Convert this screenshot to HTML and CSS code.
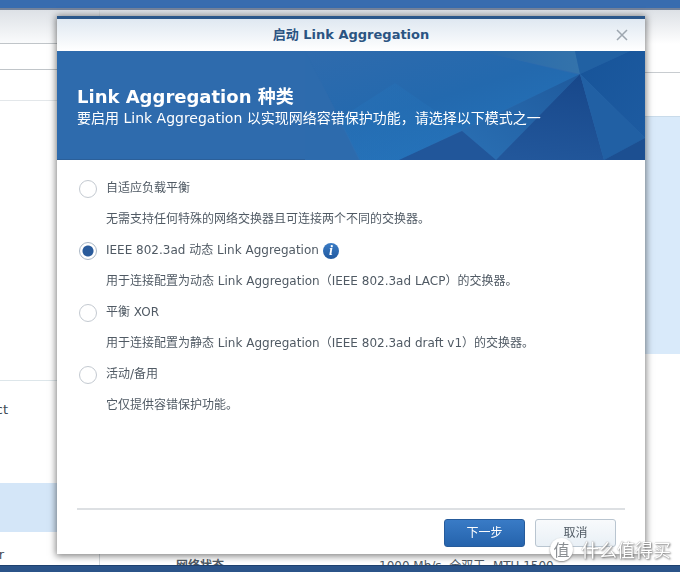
FILE: index.html
```html
<!DOCTYPE html>
<html lang="zh-CN">
<head>
<meta charset="utf-8">
<title>启动 Link Aggregation</title>
<link rel="stylesheet" href="styles.css">
</head>
<body>
<div class="desktop">
  <div class="window-bar"></div>
  <div class="backdrop">
    <nav class="sidebar">
      <div class="side-toolbar"></div>
      <div class="side-search"></div>
      <div class="side-head"></div>
      <div class="side-group"></div>
      <div class="side-item">ct</div>
      <div class="side-item selected"></div>
      <div class="side-item last">r</div>
    </nav>
    <div class="content">
      <div class="content-toolbar"></div>
      <div class="content-tools"></div>
      <div class="card"></div>
      <div class="status"><b>网络状态</b><span>1000 Mb/s, 全双工, MTU 1500</span></div>
    </div>
  </div>
  <div class="taskbar"></div>
</div>

<form class="dialog" role="dialog" aria-labelledby="dialog-title">
  <header class="titlebar">
    <span class="title" id="dialog-title">启动 Link Aggregation</span>
    <button class="close" type="button" aria-label="关闭">
      <svg viewBox="0 0 12 12" width="12" height="12"><path d="M1 1L11 11M11 1L1 11"/></svg>
    </button>
  </header>
  <section class="banner">
    <svg class="facets" viewBox="0 0 340 109" aria-hidden="true">
      <defs>
        <linearGradient id="glow" x1="0" y1="0" x2=".8" y2="1"><stop offset="0" stop-color="#2f6bad"/><stop offset=".5" stop-color="#2369ae"/><stop offset="1" stop-color="#2474bc"/></linearGradient>
        <linearGradient id="bright" x1="0" y1="1" x2="1" y2="0"><stop offset="0" stop-color="#2877bf"/><stop offset="1" stop-color="#2470b6"/></linearGradient>
        <linearGradient id="side" x1="1" y1="0" x2="0" y2="1"><stop offset="0" stop-color="#1f5a9d"/><stop offset="1" stop-color="#2a70b4"/></linearGradient>
        <linearGradient id="deep" x1=".5" y1="0" x2=".3" y2="1"><stop offset="0" stop-color="#18488b"/><stop offset="1" stop-color="#22579b"/></linearGradient>
        <linearGradient id="right" x1="0" y1="0" x2="1" y2="1"><stop offset="0" stop-color="#175499"/><stop offset="1" stop-color="#1d5ba1"/></linearGradient>
        <linearGradient id="haze" x1="0" y1="0" x2="1" y2="0"><stop offset="0" stop-color="#2869aa"/><stop offset="1" stop-color="#3473ab"/></linearGradient>
      </defs>
      <path fill="#2e6bad" d="M0 0H340V109H0Z"/>
      <path fill="url(#glow)" d="M0 0H175L275 24L155 80L95 109H55L35 68Z"/>
      <path fill="#2d6bad" d="M0 0L35 68L55 109H0Z"/>
      <path fill="url(#bright)" d="M90 32L132 61L157 80L94 109H54L34 68Z" opacity=".4"/>
      <path fill="url(#haze)" d="M174 0H270L275 23Z"/>
      <path fill="#2161a3" d="M270 0H325L275 23Z"/>
      <path fill="url(#right)" d="M325 0H340V87L275 23Z"/>
      <path fill="url(#side)" d="M275 23L157 80L191 109Z"/>
      <path fill="#21569a" d="M94 109L157 80L191 109Z"/>
      <path fill="url(#deep)" d="M275 23L191 109H299Z"/>
      <path fill="#2160a4" d="M275 23L299 109L340 87Z"/>
      <path fill="#1c4f91" d="M299 109L340 87V109Z"/>
    </svg>
    <div class="banner-text">
      <h1>Link Aggregation 种类</h1>
      <p>要启用 Link Aggregation 以实现网络容错保护功能，请选择以下模式之一</p>
    </div>
  </section>
  <div class="modes">
    <div class="mode">
      <input type="radio" name="mode" id="adaptive" aria-describedby="adaptive-note">
      <label for="adaptive">自适应负载平衡</label>
      <p id="adaptive-note">无需支持任何特殊的网络交换器且可连接两个不同的交换器。</p>
    </div>
    <div class="mode">
      <input type="radio" name="mode" id="dynamic" checked aria-describedby="dynamic-note">
      <label for="dynamic">IEEE 802.3ad 动态 Link Aggregation<span class="info">i</span></label>
      <p id="dynamic-note">用于连接配置为动态 Link Aggregation（IEEE 802.3ad LACP）的交换器。</p>
    </div>
    <div class="mode">
      <input type="radio" name="mode" id="xor" aria-describedby="xor-note">
      <label for="xor">平衡 XOR</label>
      <p id="xor-note">用于连接配置为静态 Link Aggregation（IEEE 802.3ad draft v1）的交换器。</p>
    </div>
    <div class="mode">
      <input type="radio" name="mode" id="standby" aria-describedby="standby-note">
      <label for="standby">活动/备用</label>
      <p id="standby-note">它仅提供容错保护功能。</p>
    </div>
  </div>
  <footer class="actions">
    <button class="button primary" type="submit">下一步</button>
    <button class="button" type="button">取消</button>
  </footer>
</form>

<div class="watermark"><span class="seal">值</span><span>什么值得买</span></div>
</body>
</html>
```

FILE: styles.css
```css
* {
  box-sizing: border-box;
}

body {
  margin: 0;
  font: 12px/18px "DejaVu Sans", "Noto Sans CJK SC", sans-serif;
  color: #505a64;
}

h1,
p {
  margin: 0;
}

button {
  font: inherit;
}

.desktop {
  display: flex;
  flex-direction: column;
  height: 100vh;
  overflow: hidden;
  background: #fff;
}

.window-bar {
  flex: none;
  height: 10px;
  background: #386caf;
  border-bottom: 2px solid #74839b;
}

.taskbar {
  flex: none;
  height: 7px;
  background: #2b5489;
  border-top: 1px solid #1e416f;
}

.backdrop {
  flex: 1;
  min-height: 0;
  display: grid;
  grid-template-columns: 100px 1fr;
}

.sidebar {
  display: flex;
  flex-direction: column;
  min-height: 0;
  overflow: hidden;
  border-right: 1px solid #d5dade;
}

.side-toolbar {
  flex: none;
  height: 34px;
  background: linear-gradient(#dde1e6, #fafbfc);
  border-bottom: 1px solid #c0c5c9;
}

.side-search {
  flex: none;
  height: 26px;
  border-bottom: 1px solid #c0c5c9;
}

.side-head {
  flex: none;
  height: 31px;
  border-bottom: 1px solid #e3e7ea;
}

.side-group {
  flex: none;
  height: 280px;
  border-bottom: 1px solid #dde6ea;
}

.side-item {
  flex: none;
  height: 102px;
  padding-top: 20px;
  width: 8px;
  direction: rtl;
  font-size: 13px;
  color: #414b55;
}

.side-item.selected {
  width: auto;
  height: 49px;
  background: #d4e6f8;
}

.side-item.last {
  width: 4px;
  padding-top: 14px;
}

.content {
  display: flex;
  flex-direction: column;
  min-width: 0;
  min-height: 0;
}

.content-toolbar {
  flex: none;
  height: 63px;
  background: linear-gradient(#dde1e6, #fff 34px);
  border-bottom: 1px solid #c8ccd0;
}

.content-tools {
  flex: none;
  height: 43px;
}

.card {
  flex: none;
  height: 238px;
  background: #d9eafa;
  border-top: 1px solid #c9dbea;
}

.status {
  flex: 1;
  display: grid;
  grid-template-columns: 203px 1fr;
  align-items: end;
  min-height: 0;
  padding-left: 76px;
  overflow: hidden;
}

.status > * {
  height: 8px;
}

.dialog {
  position: fixed;
  inset: 16px 35px 18px 57px;
  display: flex;
  flex-direction: column;
  background: #fff;
  border-top: 3px solid #2a578b;
  box-shadow: 0 1px 7px 1px rgba(0, 0, 0, .5);
}

.titlebar {
  flex: none;
  display: grid;
  grid-template-columns: 46px 1fr 46px;
  align-items: center;
  height: 32px;
  background: linear-gradient(#dfe8f1, #fff);
}

.title {
  grid-column: 2;
  text-align: center;
  font-size: 13px;
  font-weight: 700;
  color: #2b5482;
}

.close {
  display: grid;
  place-items: center;
  height: 32px;
  padding: 0;
  background: none;
  border: 0;
}

.close svg {
  fill: none;
  stroke: #9da6af;
  stroke-width: 1.5;
}

.banner {
  flex: none;
  position: relative;
  display: flex;
  align-items: center;
  height: 109px;
  background: #2e6bad;
  border-bottom: 1px solid #2b5f99;
}

.facets {
  position: absolute;
  top: 0;
  right: 0;
  height: 109px;
}

.banner-text {
  position: relative;
  padding: 4px 20px 0;
  color: #fff;
}

.banner-text h1 {
  font-size: 18px;
  line-height: 22px;
}

.banner-text p {
  font-size: 14px;
  line-height: 20px;
}

.modes {
  flex: 1;
  min-height: 0;
  padding: 13px 20px 0;
}

.mode {
  display: grid;
  grid-template-columns: 20px 1fr;
  column-gap: 9px;
  align-items: center;
  line-height: 31px;
}

.mode input {
  appearance: none;
  width: 18px;
  height: 18px;
  margin: 0 2px;
  border: 1px solid #c3c9d0;
  border-radius: 50%;
  background: #fff;
}

.mode input:checked {
  border-color: #aab7c5;
  background: radial-gradient(circle, #2a5b9b 5px, #fff 6px);
}

.mode label {
  display: flex;
  align-items: center;
  gap: 4px;
}

.mode p {
  grid-column: 2;
}

.info {
  width: 16px;
  height: 16px;
  border-radius: 50%;
  background: linear-gradient(#3b7cc5, #1f589f);
  color: #fff;
  font: italic 700 14px/16px "Liberation Serif", serif;
  text-align: center;
}

.actions {
  flex: none;
  display: flex;
  justify-content: flex-end;
  gap: 10px;
  margin: 0 20px;
  padding: 9px 9px 7px;
  border-top: 2px solid #dde0e3;
}

.button {
  width: 81px;
  height: 28px;
  padding: 0;
  border: 1px solid #b9c5d0;
  border-radius: 3px;
  background: linear-gradient(#f8fafc, #e9f0f6);
  color: #505a64;
}

.button.primary {
  border-color: #265b9b;
  background: linear-gradient(#397bc6, #2563ac);
  color: #fff;
}

.watermark {
  position: fixed;
  right: 9px;
  bottom: 11px;
  display: flex;
  align-items: center;
  gap: 8px;
  font: 18px/24px "Noto Sans CJK SC", sans-serif;
  color: #fff;
  text-shadow: 1px 1px 2px #777, 0 0 1px #888;
}

.seal {
  width: 23px;
  height: 23px;
  border-radius: 50%;
  background: #fff;
  box-shadow: 0 1px 2px #888;
  color: #8a8e92;
  font-size: 16px;
  line-height: 22px;
  text-align: center;
  text-shadow: none;
}
```
